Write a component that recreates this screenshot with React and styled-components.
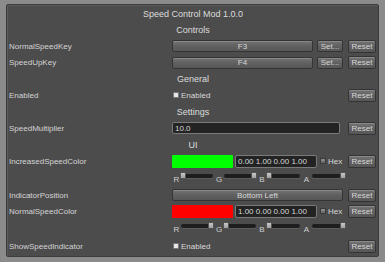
import React from "react";
import styled, { createGlobalStyle } from "styled-components";

const GlobalStyle = createGlobalStyle`
  html, body { margin: 0; padding: 0; background: #8b8b8b; }
  body { font-family: "Liberation Sans", Arial, sans-serif; }
  * { box-sizing: border-box; }
`;

const Page = styled.div`
  width: 385px;
  height: 262px;
  padding: 4px 6px 5px 6px;
  background: #8b8b8b;
`;

const Panel = styled.div`
  height: 253px;
  width: 373px;
  background: #4c4c4c;
  border: 1px solid #3c3c3c;
  box-shadow: inset 1px 1px 0 #5a5a5a;
  border-radius: 2px;
  padding: 0 0 0 1px;
  display: flex;
  flex-direction: column;
  color: #d6d6d6;
`;

const Header = styled.div`
  height: ${(p) => p.h || 16}px;
  display: flex;
  align-items: center;
  justify-content: center;
  font-size: 9px;
  color: #dcdcdc;
`;

const Row = styled.div`
  height: ${(p) => p.h || 16}px;
  display: grid;
  grid-template-columns: 158px 171px 28px;
  column-gap: 5px;
  align-items: ${(p) => p.align || "center"};
  padding-left: 1px;
`;

const Label = styled.div`
  font-size: 8px;
  color: #d4d4d4;
  white-space: nowrap;
`;

const Control = styled.div`
  display: flex;
  align-items: center;
  gap: ${(p) => p.gap ?? 4}px;
  height: 100%;
`;

const GrayButton = styled.div`
  height: ${(p) => p.h || 12}px;
  width: ${(p) => (p.w ? p.w + "px" : "auto")};
  flex: ${(p) => (p.w ? "none" : "1")};
  display: flex;
  align-items: center;
  justify-content: center;
  font-size: 8px;
  color: #d8d8d8;
  background: linear-gradient(#747474, #606060 50%, #575757);
  border: 1px solid #343434;
  box-shadow: inset 0 1px 0 #888;
  border-radius: 2px;
  white-space: nowrap;
`;

const ResetButton = styled(GrayButton)`
  width: 28px;
  flex: none;
  height: 13px;
`;

const TextField = styled.div`
  height: ${(p) => p.h || 12}px;
  width: ${(p) => (p.w ? p.w + "px" : "auto")};
  flex: ${(p) => (p.w ? "none" : "1")};
  margin-right: ${(p) => p.mr || 0}px;
  background: #232323;
  border: 1px solid #7a7a7a;
  border-radius: 2px;
  font-size: 8px;
  color: #d8d8d8;
  display: flex;
  align-items: center;
  padding-left: 2px;
  white-space: nowrap;
`;

const Swatch = styled.div`
  width: 61px;
  height: 13px;
  flex: none;
  background: ${(p) => p.color};
  border-radius: 1px;
`;

const CheckWrap = styled.div`
  display: flex;
  align-items: center;
  gap: 2px;
  font-size: 8px;
  color: #d8d8d8;
  padding-left: 1px;
`;

const Box = styled.div`
  width: 6px;
  height: 6px;
  flex: none;
  border: 1px solid ${(p) => (p.checked ? "#777" : "#3a3a3a")};
  background: ${(p) => (p.checked ? "#e6e6e6" : "#6c6c6c")};
  box-shadow: ${(p) => (p.checked ? "none" : "inset 0 2px 0 #888")};
`;

const Sliders = styled.div`
  display: flex;
  align-items: flex-start;
  height: 14px;
  padding-top: 4px;
`;

const Channel = styled.div`
  display: flex;
  align-items: flex-start;
  width: ${(p) => p.w}px;
  flex: none;
`;

const ChannelLabel = styled.div`
  width: ${(p) => p.w}px;
  font-size: 8px;
  color: #d0d0d0;
  padding-top: 2px;
  text-align: center;
`;

const Track = styled.div`
  position: relative;
  width: ${(p) => p.w}px;
  height: 4px;
  margin-top: 1px;
  background: #1e1e1e;
  border-radius: 2px;
  box-shadow: 0 1px 0 #5c5c5c;
`;

const Handle = styled.div`
  position: absolute;
  top: -2px;
  ${(p) => (p.right ? "right: -1px;" : "left: -1px;")}
  width: 6px;
  height: 7px;
  background: linear-gradient(#c8c8c8, #a0a0a0);
  border: 1px solid #555;
  border-radius: 1px;
`;

const channels = [
  { l: "R", lw: 9, tw: 32 },
  { l: "G", lw: 10, tw: 32 },
  { l: "B", lw: 10, tw: 33 },
  { l: "A", lw: 11, tw: 33 },
];

function SliderRow({ pos }) {
  return (
    <Row h={18} align="start">
      <span />
      <Sliders>
        {channels.map((c, i) => (
          <Channel key={c.l} w={c.lw + c.tw + 1}>
            <ChannelLabel w={c.lw}>{c.l}</ChannelLabel>
            <Track w={c.tw}>
              <Handle right={pos[i]} />
            </Track>
          </Channel>
        ))}
      </Sliders>
      <span />
    </Row>
  );
}

function ColorRow({ label, color, value }) {
  return (
    <Row h={16}>
      <Label>{label}</Label>
      <Control gap={2}>
        <Swatch color={color} />
        <TextField w={82} h={13}>{value}</TextField>
        <CheckWrap>
          <Box />
          <span>Hex</span>
        </CheckWrap>
      </Control>
      <ResetButton>Reset</ResetButton>
    </Row>
  );
}

export default function App() {
  return (
    <>
      <GlobalStyle />
      <Page>
        <Panel>
          <Header h={17}>Speed Control Mod 1.0.0</Header>
          <Header h={16}>Controls</Header>
          <Row h={16}>
            <Label>NormalSpeedKey</Label>
            <Control>
              <GrayButton>F3</GrayButton>
              <GrayButton w={26}>Set...</GrayButton>
            </Control>
            <ResetButton>Reset</ResetButton>
          </Row>
          <Row h={17}>
            <Label>SpeedUpKey</Label>
            <Control>
              <GrayButton>F4</GrayButton>
              <GrayButton w={26}>Set...</GrayButton>
            </Control>
            <ResetButton>Reset</ResetButton>
          </Row>
          <Header h={16}>General</Header>
          <Row h={16}>
            <Label>Enabled</Label>
            <CheckWrap>
              <Box checked />
              <span>Enabled</span>
            </CheckWrap>
            <ResetButton>Reset</ResetButton>
          </Row>
          <Header h={17}>Settings</Header>
          <Row h={16}>
            <Label>SpeedMultiplier</Label>
            <Control>
              <TextField mr={3}>10.0</TextField>
            </Control>
            <ResetButton>Reset</ResetButton>
          </Row>
          <Header h={17}>UI</Header>
          <ColorRow label="IncreasedSpeedColor" color="#00ff00" value="0.00 1.00 0.00 1.00" />
          <SliderRow pos={[false, true, false, true]} />
          <Row h={16}>
            <Label>IndicatorPosition</Label>
            <Control>
              <GrayButton>Bottom Left</GrayButton>
            </Control>
            <ResetButton>Reset</ResetButton>
          </Row>
          <ColorRow label="NormalSpeedColor" color="#ff0000" value="1.00 0.00 0.00 1.00" />
          <SliderRow pos={[true, false, false, true]} />
          <Row h={18}>
            <Label>ShowSpeedIndicator</Label>
            <CheckWrap>
              <Box checked />
              <span>Enabled</span>
            </CheckWrap>
            <ResetButton>Reset</ResetButton>
          </Row>
        </Panel>
      </Page>
    </>
  );
}
